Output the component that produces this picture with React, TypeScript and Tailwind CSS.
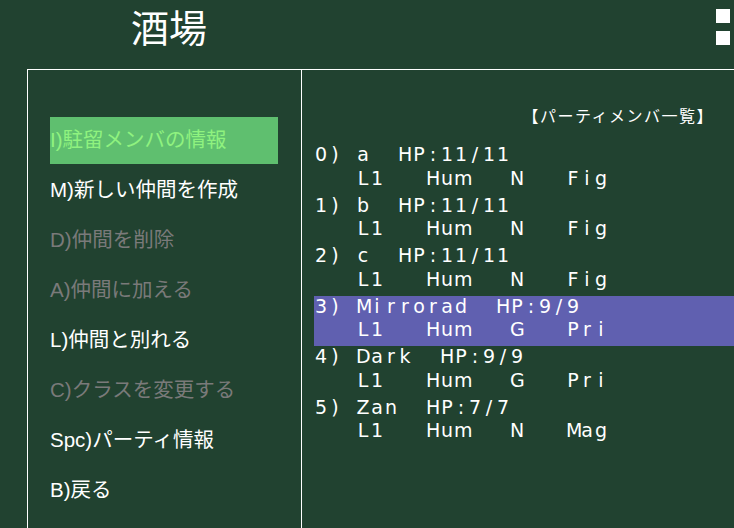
import React from "react";

type MenuItem = { label: string; state: "active" | "normal" | "disabled" };

const menu: MenuItem[] = [
  { label: "I)駐留メンバの情報", state: "active" },
  { label: "M)新しい仲間を作成", state: "normal" },
  { label: "D)仲間を削除", state: "disabled" },
  { label: "A)仲間に加える", state: "disabled" },
  { label: "L)仲間と別れる", state: "normal" },
  { label: "C)クラスを変更する", state: "disabled" },
  { label: "Spc)パーティ情報", state: "normal" },
  { label: "B)戻る", state: "normal" },
];

const party = [
  { head: "0) a  HP:11/11", info: "   L1   Hum   N   Fig" },
  { head: "1) b  HP:11/11", info: "   L1   Hum   N   Fig" },
  { head: "2) c  HP:11/11", info: "   L1   Hum   N   Fig" },
  { head: "3) Mirrorad  HP:9/9", info: "   L1   Hum   G   Pri", selected: true },
  { head: "4) Dark  HP:9/9", info: "   L1   Hum   G   Pri" },
  { head: "5) Zan  HP:7/7", info: "   L1   Hum   N   Mag" },
];

const jp = "font-['Liberation_Sans','Noto_Sans_CJK_JP',sans-serif]";

// fixed 14px cells, like the game's bitmap font
function Cells({ text }: { text: string }) {
  return (
    <div className="flex h-[20px] leading-[20px]">
      {text.split("").map((ch, i) => (
        <span key={i} className="inline-block w-[14px] shrink-0 text-center whitespace-pre">
          {ch}
        </span>
      ))}
    </div>
  );
}

function MenuRow({ item }: { item: MenuItem }) {
  const color =
    item.state === "active"
      ? "bg-[#5fbf6f] text-[#8ff27f]"
      : item.state === "disabled"
        ? "text-[#7a7a7a]"
        : "text-white";
  return (
    <div className={`h-[47px] w-[228px] flex items-center text-[20.5px] whitespace-nowrap ${color}`}>
      {item.label}
    </div>
  );
}

export default function App() {
  return (
    <div className={`w-[734px] h-[528px] bg-[#214230] overflow-hidden flex flex-col ${jp}`}>
      <header className="h-[69px] flex justify-between shrink-0">
        <h1 className="pl-[131px] pt-[2px] h-[54px] leading-[54px] text-[38px] text-white font-normal">
          酒場
        </h1>
        <div className="flex flex-col gap-[8px] pt-[9px] pr-[4px]">
          <div className="w-[14px] h-[14px] bg-white" />
          <div className="w-[14px] h-[14px] bg-white" />
        </div>
      </header>

      <div className="flex flex-1 ml-[27px] border-t border-white">
        <nav className="w-[275px] shrink-0 border-l border-r border-white pt-[47px] pl-[22px] flex flex-col gap-[3px]">
          {menu.map((m) => (
            <MenuRow key={m.label} item={m} />
          ))}
        </nav>

        <section className="flex-1 text-white">
          <div className="pt-[39px] pr-[20px] text-right text-[16px] leading-[16px] tracking-[1.5px]">
            【パーティメンバ一覧】
          </div>
          <div className="mt-[19px] pl-[12px] font-['DejaVu_Sans',sans-serif] text-[19px]">
            {party.map((p) => (
              <div
                key={p.head}
                className={`h-[50.6px] flex flex-col ${p.selected ? "bg-[#6060b0]" : ""}`}
              >
                <Cells text={p.head} />
                <div className="mt-[3.5px]">
                  <Cells text={p.info} />
                </div>
              </div>
            ))}
          </div>
        </section>
      </div>
    </div>
  );
}
